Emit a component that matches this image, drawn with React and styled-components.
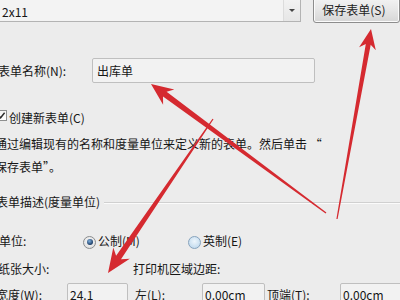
import React from 'react';
import styled, { createGlobalStyle } from 'styled-components';

const Global = createGlobalStyle`
  html, body { margin: 0; padding: 0; background: #ececec; }
  body { font-family: "Noto Sans CJK SC", "Noto Sans", sans-serif; }
`;

const Screen = styled.div`
  position: relative;
  width: 400px;
  height: 300px;
  overflow: hidden;
  background: #ececec;
  color: #161616;
  font-size: 12px;
  line-height: 16px;
  white-space: nowrap;
`;

const TopRow = styled.div`
  display: flex;
  align-items: flex-start;
  gap: 12px;
  margin-top: -3px;
  height: 26px;
`;

const Combo = styled.div`
  box-sizing: border-box;
  margin-left: -20px;
  width: 335px;
  height: 25px;
  border: 1px solid #b3b3b3;
  border-top: none;
  background: #f3f3f3;
  display: flex;
  align-items: stretch;
`;

const ComboText = styled.div`
  flex: 1;
  padding: 7px 0 0 21px;
`;

const DropBtn = styled.div`
  width: 16px;
  border-left: 1px solid #dcdcdc;
  background: linear-gradient(#f4f4f4, #e6e6e6);
  display: flex;
  align-items: center;
  justify-content: center;
  padding-top: 3px;
  &::after {
    content: '';
    border-left: 3px solid transparent;
    border-right: 3px solid transparent;
    border-top: 3px solid #444;
  }
`;

const Button = styled.div`
  box-sizing: border-box;
  width: 90px;
  height: 26px;
  border: 1px solid #8d8d8d;
  border-radius: 3px;
  background: linear-gradient(#f3f3f3, #e6e6e6 50%, #d6d6d6);
  box-shadow: inset 0 0 0 1px #fbfbfb;
  padding: 4px 0 0 8px;
  color: #222;
`;

const Row = styled.div`
  display: flex;
  align-items: ${p => p.$align || 'center'};
  margin-top: ${p => p.$top}px;
  height: ${p => p.$h || 16}px;
`;

const Label = styled.span`
  display: inline-block;
  margin-left: ${p => p.$left || 0}px;
  width: ${p => (p.$w ? `${p.$w}px` : 'auto')};
  flex: none;
`;

const TextBox = styled.div`
  box-sizing: border-box;
  width: ${p => p.$w}px;
  height: ${p => p.$h || 24}px;
  border: 1px solid #bfbfbf;
  border-radius: 2px;
  background: #f2f2f2;
  padding-left: ${p => p.$pad || 2}px;
  display: flex;
  align-items: center;
  flex: none;
`;

const CheckBox = styled.span`
  box-sizing: border-box;
  display: inline-flex;
  align-items: center;
  justify-content: center;
  margin-left: -4px;
  width: 11px;
  height: 11px;
  border: 1px solid #8e8f8f;
  background: linear-gradient(#f4f4f4, #ffffff);
  flex: none;
`;

const Paragraph = styled.div`
  margin-top: 6px;
  margin-left: -5px;
  line-height: 23px;
`;

const GroupLine = styled.div`
  flex: 1;
  margin-left: 4px;
  margin-top: 2px;
  height: 0;
  border-top: 1px solid #d0d0d0;
  border-bottom: 1px solid #fbfbfb;
`;

const Option = styled.span`
  display: inline-flex;
  align-items: center;
  width: ${p => p.$w}px;
  flex: none;
`;

const Radio = styled.span`
  box-sizing: border-box;
  width: 13px;
  height: 13px;
  border-radius: 50%;
  margin-right: 2px;
  display: inline-flex;
  align-items: center;
  justify-content: center;
  border: 1px solid ${p => (p.$on ? '#8a8c8e' : '#86a3bd')};
  background: ${p =>
    p.$on
      ? 'radial-gradient(circle at 50% 40%, #fafafa, #d9d9d9)'
      : 'radial-gradient(circle at 50% 40%, #eef6fc, #b6d3ea)'};
  margin-top: 2px;
  &::after {
    content: '';
    display: ${p => (p.$on ? 'block' : 'none')};
    width: 6px;
    height: 6px;
    border-radius: 50%;
    background: radial-gradient(circle at 40% 35%, #7fb0de, #1d3d66 70%);
  }
`;

const Overlay = styled.svg`
  position: absolute;
  left: 0;
  top: 0;
  pointer-events: none;
`;

function arrowPoints(tail, tip, L, W, w1, w0) {
  const dx = tip[0] - tail[0];
  const dy = tip[1] - tail[1];
  const len = Math.hypot(dx, dy);
  const ux = dx / len;
  const uy = dy / len;
  const nx = -uy;
  const ny = ux;
  const join = [tip[0] - ux * L * 0.78, tip[1] - uy * L * 0.78];
  const barb = [tip[0] - ux * L, tip[1] - uy * L];
  const p = (b, s) => `${(b[0] + nx * s).toFixed(1)},${(b[1] + ny * s).toFixed(1)}`;
  return [
    p(tail, w0 / 2),
    p(join, w1 / 2),
    p(barb, W),
    `${tip[0]},${tip[1]}`,
    p(barb, -W),
    p(join, -w1 / 2),
    p(tail, -w0 / 2),
  ].join(' ');
}

const arrows = [
  { tail: [337, 219], tip: [371, 29], L: 20, W: 8.5, w1: 5, w0: 1.2 },
  { tail: [326, 213], tip: [151, 84], L: 22, W: 9.5, w1: 6, w0: 1.2 },
  { tail: [213, 119], tip: [108, 273], L: 24, W: 10, w1: 6, w0: 1.2 },
];

export default function App() {
  return (
    <>
      <Global />
      <Screen>
        <TopRow>
          <Combo>
            <ComboText>2x11</ComboText>
            <DropBtn />
          </Combo>
          <Button>保存表单(S)</Button>
        </TopRow>

        <Row $top={35} $h={25}>
          <Label $left={-2} $w={94}>表单名称(N):</Label>
          <TextBox $w={223} $h={25} $pad={4}>出库单</TextBox>
        </Row>

        <Row $top={27} $align="flex-start">
          <CheckBox>
            <svg width="9" height="9" viewBox="0 0 9 9">
              <path d="M1.5 4.5 L3.6 6.8 L7.6 1.8" fill="none" stroke="#2b2b2b" strokeWidth="1.4" />
            </svg>
          </CheckBox>
          <Label $left={2}>创建新表单(C)</Label>
        </Row>

        <Paragraph>
          通过编辑现有的名称和度量单位来定义新的表单。然后单击 “
          <br />
          保存表单”。
        </Paragraph>

        <Row $top={16}>
          <Label $left={-4}>表单描述(度量单位)</Label>
          <GroupLine />
        </Row>

        <Row $top={23}>
          <Label $left={-1} $w={84}>单位:</Label>
          <Option $w={105}>
            <Radio $on />
            公制(M)
          </Option>
          <Option $w={80}>
            <Radio />
            英制(E)
          </Option>
        </Row>

        <Row $top={12}>
          <Label $left={-2} $w={135}>纸张大小:</Label>
          <Label>打印机区域边距:</Label>
        </Row>

        <Row $top={6} $h={24}>
          <Label $left={-4} $w={71}>宽度(W):</Label>
          <TextBox $w={61}>24.1</TextBox>
          <Label $left={7} $w={67}>左(L):</Label>
          <TextBox $w={63}>0.00cm</TextBox>
          <Label $left={2} $w={73}>顶端(T):</Label>
          <TextBox $w={80}>0.00cm</TextBox>
        </Row>

        <Overlay width="400" height="300" viewBox="0 0 400 300">
          {arrows.map((a, i) => (
            <polygon key={i} points={arrowPoints(a.tail, a.tip, a.L, a.W, a.w1, a.w0)} fill="#d52a30" />
          ))}
        </Overlay>
      </Screen>
    </>
  );
}
